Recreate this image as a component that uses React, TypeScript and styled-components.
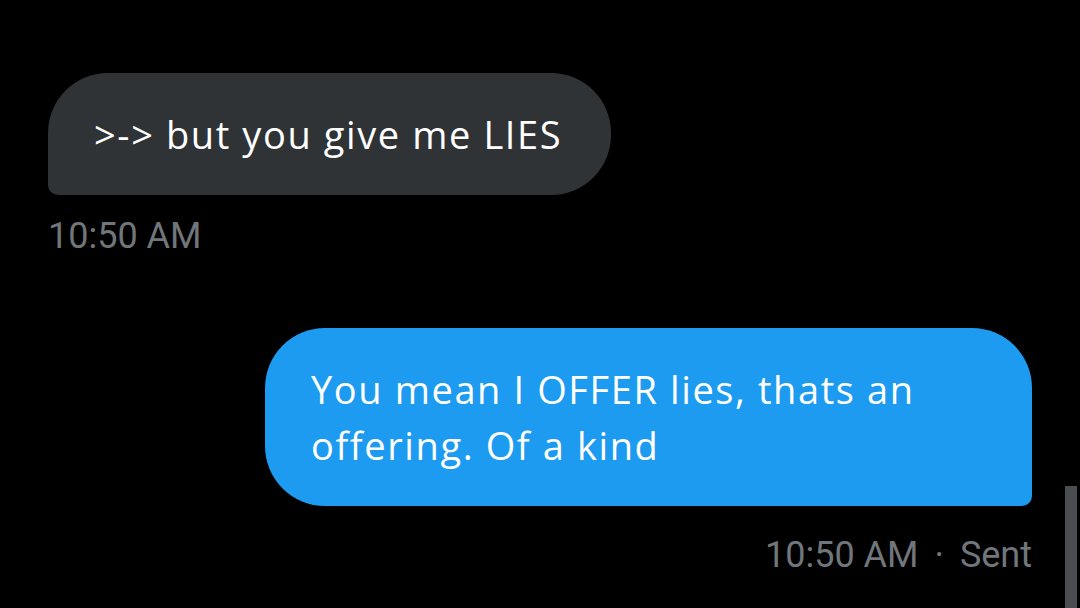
import styled, { createGlobalStyle } from "styled-components";

const GlobalStyle = createGlobalStyle`
  html, body {
    margin: 0;
    padding: 0;
    background: #000000;
    overflow: hidden;
  }
`;

// Conversation area
const Page = styled.main`
  position: relative;
  width: 1080px;
  height: 608px;
  background: #000000;
  box-sizing: border-box;
  padding: 73px 48px 0 48px;
  overflow: hidden;
`;

const Thread = styled.div`
  display: flex;
  flex-direction: column;
`;

const MessageGroup = styled.div<{ $mine?: boolean; $gapTop?: number }>`
  display: flex;
  flex-direction: column;
  align-items: ${({ $mine }) => ($mine ? "flex-end" : "flex-start")};
  margin-top: ${({ $gapTop }) => $gapTop ?? 0}px;
`;

const Bubble = styled.div<{ $mine?: boolean }>`
  box-sizing: border-box;
  max-width: 767px;
  padding: 33px 49px 33px 46px;
  font-family: "Open Sans", "Noto Sans", sans-serif;
  font-size: 38px;
  letter-spacing: 1.6px;
  line-height: 56px;
  color: #ffffff;
  background: ${({ $mine }) => ($mine ? "#1d9bf0" : "#2f3336")};
  border-radius: ${({ $mine }) =>
    $mine ? "60px 60px 10px 60px" : "60px 60px 60px 10px"};
`;

const Timestamp = styled.div<{ $gapTop: number }>`
  margin-top: ${({ $gapTop }) => $gapTop}px;
  font-family: Roboto, "Liberation Sans", sans-serif;
  font-size: 36px;
  line-height: 42px;
  color: #71767b;
  white-space: nowrap;
`;

const Dot = styled.span`
  margin: 0 16px 0 16px;
`;

// Scroll indicator on the right edge
const ScrollThumb = styled.div`
  position: absolute;
  right: 3px;
  top: 486px;
  bottom: 0;
  width: 12px;
  background: #4a4d51;
`;

function App() {
  return (
    <>
      <GlobalStyle />
      <Page>
        <Thread>
          <MessageGroup>
            <Bubble>&gt;-&gt; but you give me LIES</Bubble>
            <Timestamp $gapTop={20}>10:50 AM</Timestamp>
          </MessageGroup>

          <MessageGroup $mine $gapTop={71}>
            <Bubble $mine>You mean I OFFER lies, thats an offering. Of a kind</Bubble>
            <Timestamp $gapTop={28}>
              10:50 AM<Dot>·</Dot>Sent
            </Timestamp>
          </MessageGroup>
        </Thread>
        <ScrollThumb />
      </Page>
    </>
  );
}

export default App;
